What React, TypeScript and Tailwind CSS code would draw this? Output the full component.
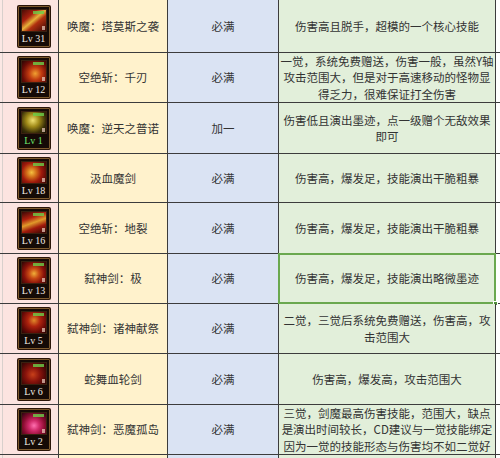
import React from "react";

type Row = {
  lv: string;
  name: string;
  level: string;
  desc: string[];
  h: string;
  art: string;
  lvColor?: string;
  selected?: boolean;
};

const rows: Row[] = [
  {
    lv: "31",
    name: "唤魔：塔莫斯之袭",
    level: "必满",
    desc: ["伤害高且脱手，超模的一个核心技能"],
    h: "h-[53px]",
    art: "bg-[linear-gradient(140deg,#4a0c06_0%,#a8200e_30%,#e6b23a_48%,#b0300f_62%,#3a0806_100%)]",
  },
  {
    lv: "12",
    name: "空绝斩：千刃",
    level: "必满",
    desc: ["一觉，系统免费赠送，伤害一般，虽然Y轴", "攻击范围大，但是对于高速移动的怪物显", "得乏力，很难保证打全伤害"],
    h: "h-[50px]",
    art: "bg-[radial-gradient(circle_at_55%_60%,#f0a030_0%,#c03a10_35%,#6a0c06_70%,#2a0604_100%)]",
  },
  {
    lv: "1",
    name: "唤魔：逆天之普诺",
    level: "加一",
    desc: ["伤害低且演出墨迹，点一级赠个无敌效果", "即可"],
    h: "h-[51px]",
    art: "bg-[radial-gradient(circle_at_45%_40%,#f0e070_0%,#a08a18_35%,#3a3008_70%,#140f04_100%)]",
    lvColor: "text-[#6ee86e]",
  },
  {
    lv: "18",
    name: "汲血魔剑",
    level: "必满",
    desc: ["伤害高，爆发足，技能演出干脆粗暴"],
    h: "h-[49px]",
    art: "bg-[radial-gradient(circle_at_40%_50%,#f4c040_0%,#d06a18_28%,#a01a0c_55%,#3a0604_100%)]",
  },
  {
    lv: "16",
    name: "空绝斩：地裂",
    level: "必满",
    desc: ["伤害高，爆发足，技能演出干脆粗暴"],
    h: "h-[51px]",
    art: "bg-[linear-gradient(160deg,#3a0806_0%,#b0200e_30%,#e09a2a_50%,#a01a0c_70%,#300604_100%)]",
  },
  {
    lv: "13",
    name: "弑神剑：极",
    level: "必满",
    desc: ["伤害高，爆发足，技能演出略微墨迹"],
    h: "h-[50px]",
    art: "bg-[radial-gradient(circle_at_50%_55%,#f0b038_0%,#c84a14_30%,#8a120a_60%,#2c0504_100%)]",
    selected: true,
  },
  {
    lv: "5",
    name: "弑神剑：诸神献祭",
    level: "必满",
    desc: ["二觉，三觉后系统免费赠送，伤害高，攻", "击范围大"],
    h: "h-[50px]",
    art: "bg-[radial-gradient(circle_at_50%_40%,#e08a2a_0%,#b0240e_35%,#6a0a06_70%,#280404_100%)]",
  },
  {
    lv: "6",
    name: "蛇舞血轮剑",
    level: "必满",
    desc: ["伤害高，爆发高，攻击范围大"],
    h: "h-[51px]",
    art: "bg-[radial-gradient(circle_at_45%_55%,#c8401a_0%,#8a140c_40%,#4a0806_75%,#200404_100%)]",
  },
  {
    lv: "2",
    name: "弑神剑：恶魔孤岛",
    level: "必满",
    desc: ["三觉，剑魔最高伤害技能，范围大，缺点", "是演出时间较长，CD建议与一觉技能绑定", "因为一觉的技能形态与伤害均不如二觉好"],
    h: "h-[50px]",
    art: "bg-[radial-gradient(circle_at_50%_60%,#ff70b0_0%,#d02a6a_30%,#8a0c30_62%,#2a0410_100%)]",
  },
];

function SkillIcon({ row }: { row: Row }) {
  return (
    <div className="flex h-[41px] w-[32px] flex-col rounded-[1px] border border-[#7d5a2e] bg-[#150a06] p-[2px] shadow-[0_0_0_1px_#2a1408]">
      <div className={`relative h-[24px] w-full border border-[#3a2010] ${row.art}`}>
        <div className="absolute right-[2px] top-[1px] h-[3px] w-[11px] bg-[#6ccf4a] opacity-80" />
        <div className="absolute bottom-[1px] right-[1px] h-[4px] w-[3px] bg-[#f0d0c0] opacity-70" />
      </div>
      <div
        className={`mt-[1px] text-center text-[10px] leading-[11px] ${row.lvColor ?? "text-[#f2ece4]"}`}
        style={{ fontFamily: '"Liberation Serif", serif' }}
      >
        Lv {row.lv}
      </div>
    </div>
  );
}

export default function App() {
  return (
    <div
      className="h-[458px] w-[500px] overflow-hidden bg-white text-[11.5px] leading-[16.5px] text-[#333]"
      style={{ fontFamily: '"Noto Sans CJK SC", "Noto Sans", sans-serif' }}
    >
      {[...rows, null].map((row, i) => (
        <div
          key={i}
          className={`flex ${row ? row.h : "h-[20px]"} border-b border-[#3c3c3c]`}
        >
          <div className="w-[3px] shrink-0 border-r border-[#d8d0cc] bg-[#fbe8e4]" />
          <div className="flex w-[56px] shrink-0 items-center justify-center border-r border-[#3c3c3c] bg-[#fce4e0] pl-[6px]">
            {row && <SkillIcon row={row} />}
          </div>
          <div className="flex w-[109px] shrink-0 items-center justify-center whitespace-nowrap border-r border-[#3c3c3c] bg-[#fff2cc]">
            {row?.name}
          </div>
          <div className="flex w-[111px] shrink-0 items-center justify-center border-r border-[#3c3c3c] bg-[#dae3f3]">
            {row?.level}
          </div>
          <div className="relative flex w-[217px] shrink-0 flex-col items-center justify-center whitespace-nowrap border-r border-[#3c3c3c] bg-[#e2efda]">
            {row?.desc.map((line, j) => (
              <div key={j}>{line}</div>
            ))}
            {row?.selected && (
              <>
                <div className="absolute -inset-[1px] border-2 border-[#6aa84f]" />
                <div className="absolute -bottom-[3px] -right-[3px] h-[5px] w-[5px] border border-white bg-[#4f8f3a]" />
              </>
            )}
          </div>
          <div className="flex-1 bg-white" />
        </div>
      ))}
    </div>
  );
}
